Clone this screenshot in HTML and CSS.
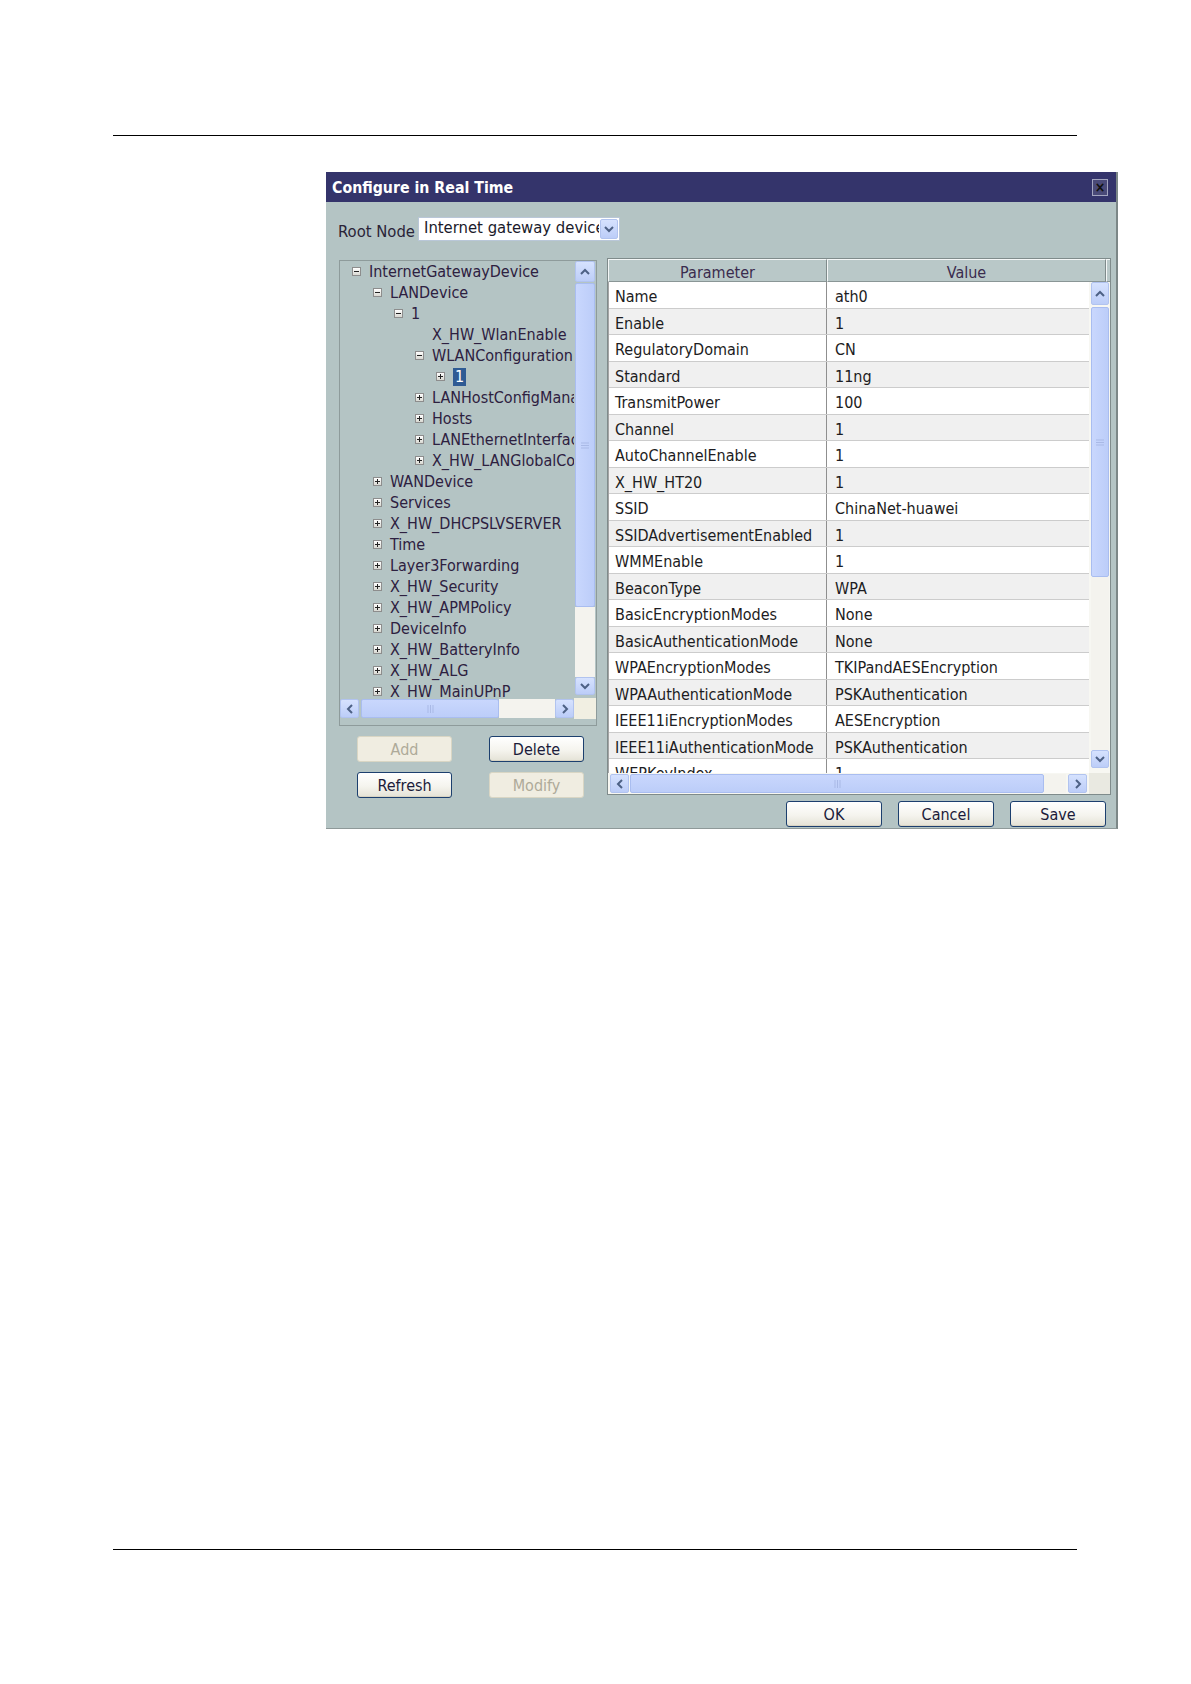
FILE: index.html
```html
<!DOCTYPE html>
<html>
<head>
<meta charset="utf-8">
<title>Configure in Real Time</title>
<link rel="stylesheet" href="styles.css">
</head>
<body>
<div class="page">
  <div class="rule"></div>
  <div class="dialog">
    <div class="titlebar">
      <span class="title">Configure in Real Time</span>
      <span class="close">×</span>
    </div>
    <div class="content">
      <div class="root-row">
        <span class="root-label">Root Node</span>
        <div class="select">
          <span class="select-text">Internet gateway device</span>
          <span class="select-btn sb-btn"><svg width="10" height="8" viewBox="0 0 10 8"><polyline points="1,2 5,6 9,2" fill="none" stroke="#4d6185" stroke-width="2"/></svg></span>
        </div>
      </div>
      <div class="panes">
        <div class="left">
          <div class="tree-panel">
            <div class="tree">
              <div class="node l0"><span class="toggle minus"></span>InternetGatewayDevice</div>
              <div class="node l1"><span class="toggle minus"></span>LANDevice</div>
              <div class="node l2"><span class="toggle minus"></span>1</div>
              <div class="node l3"><span class="toggle none"></span>X_HW_WlanEnable</div>
              <div class="node l3"><span class="toggle minus"></span>WLANConfiguration</div>
              <div class="node l4"><span class="toggle plus"></span><span class="selected">1</span></div>
              <div class="node l3"><span class="toggle plus"></span>LANHostConfigManagement</div>
              <div class="node l3"><span class="toggle plus"></span>Hosts</div>
              <div class="node l3"><span class="toggle plus"></span>LANEthernetInterfaceConfig</div>
              <div class="node l3"><span class="toggle plus"></span>X_HW_LANGlobalConfig</div>
              <div class="node l1"><span class="toggle plus"></span>WANDevice</div>
              <div class="node l1"><span class="toggle plus"></span>Services</div>
              <div class="node l1"><span class="toggle plus"></span>X_HW_DHCPSLVSERVER</div>
              <div class="node l1"><span class="toggle plus"></span>Time</div>
              <div class="node l1"><span class="toggle plus"></span>Layer3Forwarding</div>
              <div class="node l1"><span class="toggle plus"></span>X_HW_Security</div>
              <div class="node l1"><span class="toggle plus"></span>X_HW_APMPolicy</div>
              <div class="node l1"><span class="toggle plus"></span>DeviceInfo</div>
              <div class="node l1"><span class="toggle plus"></span>X_HW_BatteryInfo</div>
              <div class="node l1"><span class="toggle plus"></span>X_HW_ALG</div>
              <div class="node l1"><span class="toggle plus"></span>X_HW_MainUPnP</div>
            </div>
            <div class="vscroll tree-v">
              <span class="sb-btn up"><svg width="10" height="8" viewBox="0 0 10 8"><polyline points="1,6 5,2 9,6" fill="none" stroke="#4d6185" stroke-width="2"/></svg></span>
              <span class="thumb v-thumb tree-vthumb"><svg width="8" height="7" viewBox="0 0 8 7"><path d="M0 1h8M0 3.5h8M0 6h8" stroke="#a9b9e6" stroke-width="1"/></svg></span>
              <span class="track"></span>
              <span class="sb-btn down"><svg width="10" height="8" viewBox="0 0 10 8"><polyline points="1,2 5,6 9,2" fill="none" stroke="#4d6185" stroke-width="2"/></svg></span>
            </div>
            <div class="hscroll tree-h">
              <span class="sb-btn hbtn"><svg width="8" height="10" viewBox="0 0 8 10"><polyline points="6,1 2,5 6,9" fill="none" stroke="#4d6185" stroke-width="2"/></svg></span>
              <span class="thumb h-thumb tree-hthumb"><svg width="7" height="8" viewBox="0 0 7 8"><path d="M1 0v8M3.5 0v8M6 0v8" stroke="#a9b9e6" stroke-width="1"/></svg></span>
              <span class="track"></span>
              <span class="sb-btn hbtn"><svg width="8" height="10" viewBox="0 0 8 10"><polyline points="2,1 6,5 2,9" fill="none" stroke="#4d6185" stroke-width="2"/></svg></span>
            </div>
            <div class="corner"></div>
          </div>
          <div class="btn-grid">
            <button class="btn disabled">Add</button>
            <button class="btn">Delete</button>
            <button class="btn">Refresh</button>
            <button class="btn disabled">Modify</button>
          </div>
        </div>
        <div class="right">
          <div class="table-panel">
            <div class="thead">
              <div class="th th-param">Parameter</div>
              <div class="th th-value">Value</div>
              <div class="th th-rest"></div>
            </div>
            <div class="tbody">
              <div class="rows">
                <div class="row"><span class="cell param">Name</span><span class="cell value">ath0</span></div>
                <div class="row alt"><span class="cell param">Enable</span><span class="cell value">1</span></div>
                <div class="row"><span class="cell param">RegulatoryDomain</span><span class="cell value">CN</span></div>
                <div class="row alt"><span class="cell param">Standard</span><span class="cell value">11ng</span></div>
                <div class="row"><span class="cell param">TransmitPower</span><span class="cell value">100</span></div>
                <div class="row alt"><span class="cell param">Channel</span><span class="cell value">1</span></div>
                <div class="row"><span class="cell param">AutoChannelEnable</span><span class="cell value">1</span></div>
                <div class="row alt"><span class="cell param">X_HW_HT20</span><span class="cell value">1</span></div>
                <div class="row"><span class="cell param">SSID</span><span class="cell value">ChinaNet-huawei</span></div>
                <div class="row alt"><span class="cell param">SSIDAdvertisementEnabled</span><span class="cell value">1</span></div>
                <div class="row"><span class="cell param">WMMEnable</span><span class="cell value">1</span></div>
                <div class="row alt"><span class="cell param">BeaconType</span><span class="cell value">WPA</span></div>
                <div class="row"><span class="cell param">BasicEncryptionModes</span><span class="cell value">None</span></div>
                <div class="row alt"><span class="cell param">BasicAuthenticationMode</span><span class="cell value">None</span></div>
                <div class="row"><span class="cell param">WPAEncryptionModes</span><span class="cell value">TKIPandAESEncryption</span></div>
                <div class="row alt"><span class="cell param">WPAAuthenticationMode</span><span class="cell value">PSKAuthentication</span></div>
                <div class="row"><span class="cell param">IEEE11iEncryptionModes</span><span class="cell value">AESEncryption</span></div>
                <div class="row alt"><span class="cell param">IEEE11iAuthenticationMode</span><span class="cell value">PSKAuthentication</span></div>
                <div class="row"><span class="cell param">WEPKeyIndex</span><span class="cell value">1</span></div>
              </div>
              <div class="vscroll table-v">
                <span class="sb-btn up tup"><svg width="10" height="8" viewBox="0 0 10 8"><polyline points="1,6 5,2 9,6" fill="none" stroke="#4d6185" stroke-width="2"/></svg></span>
                <span class="thumb v-thumb table-vthumb"><svg width="8" height="7" viewBox="0 0 8 7"><path d="M0 1h8M0 3.5h8M0 6h8" stroke="#a9b9e6" stroke-width="1"/></svg></span>
                <span class="track"></span>
                <span class="sb-btn down"><svg width="10" height="8" viewBox="0 0 10 8"><polyline points="1,2 5,6 9,2" fill="none" stroke="#4d6185" stroke-width="2"/></svg></span>
              </div>
            </div>
            <div class="tfoot">
              <div class="hscroll table-h">
                <span class="sb-btn hbtn"><svg width="8" height="10" viewBox="0 0 8 10"><polyline points="6,1 2,5 6,9" fill="none" stroke="#4d6185" stroke-width="2"/></svg></span>
                <span class="thumb h-thumb table-hthumb"><svg width="7" height="8" viewBox="0 0 7 8"><path d="M1 0v8M3.5 0v8M6 0v8" stroke="#a9b9e6" stroke-width="1"/></svg></span>
                <span class="track"></span>
                <span class="sb-btn hbtn"><svg width="8" height="10" viewBox="0 0 8 10"><polyline points="2,1 6,5 2,9" fill="none" stroke="#4d6185" stroke-width="2"/></svg></span>
              </div>
              <div class="corner tcorner"></div>
            </div>
          </div>
          <div class="actions">
            <button class="btn">OK</button>
            <button class="btn">Cancel</button>
            <button class="btn">Save</button>
          </div>
        </div>
      </div>
    </div>
  </div>
  <div class="rule bottom"></div>
</div>
</body>
</html>
```

FILE: styles.css
```css
html, body {
  margin: 0;
  padding: 0;
  background: #ffffff;
}
body {
  font-family: "DejaVu Sans Condensed", "DejaVu Sans", sans-serif;
  font-stretch: condensed;
}
.page {
  width: 1191px;
  padding-top: 135px;
  padding-bottom: 120px;
}
.rule {
  height: 1px;
  background: #000;
  margin-left: 113px;
  width: 964px;
}
.rule.bottom {
  margin-top: 720px;
}
.dialog {
  margin: 36px 0 0 326px;
  width: 792px;
  height: 657px;
  box-sizing: border-box;
  background: #b4c4c4;
  border-right: 2px solid #7c8787;
  border-bottom: 1px solid #8e9999;
  display: flex;
  flex-direction: column;
}
.titlebar {
  height: 30px;
  flex: none;
  background: #34346b;
  display: flex;
  align-items: center;
  justify-content: space-between;
  padding: 0 8px 0 6px;
  color: #fff;
}
.title {
  font-weight: bold;
  font-size: 15.75px;
}
.close {
  width: 16px;
  height: 17px;
  box-sizing: border-box;
  border: 1px solid #a3a5bf;
  background: #4a4a78;
  display: flex;
  align-items: center;
  justify-content: center;
  color: #111;
  font-size: 14px;
  font-weight: bold;
  line-height: 1;
}
.content {
  padding: 15px 0 0 13px;
}
.root-row {
  display: flex;
  align-items: center;
  height: 24px;
}
.root-label {
  font-size: 16.5px;
  color: #2a2438;
  margin: 4px 3px 0 -1px;
}
.select {
  width: 202px;
  height: 24px;
  box-sizing: border-box;
  background: #fff;
  border: 1px solid #b9c7d8;
  display: flex;
  align-items: stretch;
}
.select-text {
  flex: 1;
  overflow: hidden;
  white-space: nowrap;
  font-size: 16.5px;
  color: #1a1a2a;
  padding-left: 5px;
  line-height: 20px;
}
.select-btn {
  width: 18px;
  margin: 1px;
}
.sb-btn {
  display: flex;
  align-items: center;
  justify-content: center;
  background: linear-gradient(#d6e2fe, #bccdf8);
  border: 1px solid #b1c3ef;
  border-radius: 2px;
  box-sizing: border-box;
  flex: none;
}
.panes {
  display: flex;
  gap: 10px;
  margin-top: 17px;
}
.left {
  width: 258px;
  margin-top: 2px;
}
.tree-panel {
  height: 466px;
  box-sizing: border-box;
  border: 1px solid #8e9b9b;
  padding-bottom: 6px;
  display: grid;
  grid-template-columns: 1fr 22px;
  grid-template-rows: 1fr 21px;
}
.tree {
  overflow: hidden;
}
.node {
  height: 21px;
  display: flex;
  align-items: center;
  white-space: nowrap;
  font-size: 16px;
  color: #2d2040;
}
.l0 { padding-left: 12px; }
.l1 { padding-left: 33px; }
.l2 { padding-left: 54px; }
.l3 { padding-left: 75px; }
.l4 { padding-left: 96px; }
.toggle {
  width: 9px;
  height: 9px;
  box-sizing: border-box;
  border: 1px solid #8d8d8d;
  background: linear-gradient(#ffffff, #d9d9d2);
  margin-right: 8px;
  flex: none;
  position: relative;
}
.toggle.none {
  visibility: hidden;
}
.toggle::before {
  content: "";
  position: absolute;
  left: 1px;
  right: 1px;
  top: 3px;
  height: 1px;
  background: #222;
}
.toggle.plus::after {
  content: "";
  position: absolute;
  top: 1px;
  bottom: 1px;
  left: 3px;
  width: 1px;
  background: #222;
}
.selected {
  background: #2f5b94;
  color: #fff;
  padding: 0 2px;
  line-height: 18px;
}
.vscroll {
  display: flex;
  flex-direction: column;
  padding: 0 1px;
}
.vscroll .sb-btn {
  width: 100%;
}
.tree-v .up { height: 21px; }
.tree-v .down { height: 18px; margin-bottom: 3px; }
.thumb {
  display: flex;
  align-items: center;
  justify-content: center;
  background: linear-gradient(90deg, #c9d7fd, #bccdf9);
  border: 1px solid #a9bdf0;
  border-radius: 2px;
  box-sizing: border-box;
  flex: none;
}
.h-thumb {
  background: linear-gradient(#c9d7fd, #bccdf9);
}
.tree-vthumb {
  height: 324px;
  margin-top: 1px;
}
.track {
  flex: 1;
  background: #f4f3ee;
}
.hscroll {
  display: flex;
  padding: 1px 0;
}
.hscroll .sb-btn.hbtn {
  width: 19px;
}
.tree-hthumb {
  width: 138px;
  margin-left: 2px;
}
.corner {
  background: #f1efe2;
}
.btn-grid {
  display: grid;
  grid-template-columns: 95px 95px;
  grid-auto-rows: 26px;
  column-gap: 37px;
  row-gap: 10px;
  margin: 10px 0 0 18px;
}
.btn {
  font-family: inherit;
  font-stretch: condensed;
  font-size: 16px;
  color: #1b1b3a;
  border: 1px solid #1c3f6e;
  border-radius: 3px;
  background: linear-gradient(#ffffff, #f5f4ee 55%, #e4e2d6);
  box-shadow: inset 0 -1px 0 #d8d3c2;
  display: flex;
  align-items: center;
  justify-content: center;
  padding: 0;
  box-sizing: border-box;
  height: 26px;
}
.btn.disabled {
  border-color: #d9d6c4;
  background: #f0ede1;
  color: #aeaa99;
  box-shadow: none;
}
.right {
  width: 504px;
}
.table-panel {
  height: 537px;
  box-sizing: border-box;
  border: 1px solid #7f8b8b;
  display: flex;
  flex-direction: column;
}
.thead {
  height: 23px;
  flex: none;
  display: flex;
}
.th {
  box-sizing: border-box;
  display: flex;
  align-items: center;
  justify-content: center;
  font-size: 16px;
  color: #3a2c4e;
  background: #b9c8c8;
  border-top: 1px solid #f4f7f7;
  border-left: 1px solid #f4f7f7;
  border-right: 1px solid #7f8b8b;
  border-bottom: 1px solid #8a9696;
  padding-top: 3px;
}
.th-param { width: 219px; }
.th-value { width: 279px; }
.th-rest { flex: 1; border-right: none; }
.tbody {
  flex: 1;
  display: flex;
  overflow: hidden;
  background: #f7f7f2;
}
.rows {
  width: 481px;
  overflow: hidden;
  border-left: 1px solid #a4a4a4;
  box-sizing: border-box;
}
.row {
  height: 26.5px;
  box-sizing: border-box;
  display: flex;
  background: #ffffff;
  border-bottom: 1px solid #cccccc;
}
.row.alt {
  background: #f0f0f0;
}
.cell {
  display: flex;
  align-items: center;
  font-size: 16px;
  color: #1c1c22;
  white-space: nowrap;
  padding-top: 4px;
}
.param {
  width: 218px;
  padding-left: 6px;
  box-sizing: border-box;
  border-right: 1px solid #8f8f8f;
}
.value {
  padding-left: 8px;
}
.table-v {
  width: 21px;
  box-sizing: border-box;
  padding: 0 1px 5px 2px;
  background: #f7f7f2;
}
.table-v .up { height: 23px; }
.table-v .down { height: 18px; }
.table-vthumb {
  height: 270px;
  margin-top: 2px;
}
.tfoot {
  height: 21px;
  flex: none;
  display: flex;
}
.table-h {
  width: 481px;
  box-sizing: border-box;
  padding: 1px 2px;
  background: #f7f7f2;
}
.table-hthumb {
  width: 414px;
  margin-left: 1px;
}
.table-h .track {
  margin-right: 2px;
}
.tcorner {
  flex: 1;
  background: #e9e9e1;
}
.actions {
  display: flex;
  justify-content: flex-end;
  gap: 16px;
  margin-top: 6px;
  padding-right: 5px;
}
.actions .btn {
  width: 96px;
}
```
